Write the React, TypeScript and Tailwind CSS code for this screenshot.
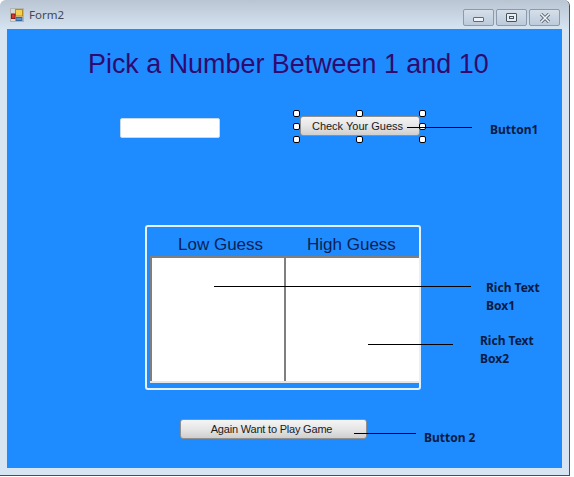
import React from 'react'

const Handle = ({ className }: { className: string }) => (
  <span className={`absolute w-[7px] h-[7px] bg-white border border-black rounded-[2px] ${className}`} />
)

const Leader = ({ className }: { className: string }) => (
  <div className={`absolute h-px bg-black ${className}`} />
)

const Note = ({ className, children }: { className: string; children: React.ReactNode }) => (
  <div className={`absolute font-['Noto_Sans',sans-serif] font-bold text-[12px] leading-[18px] text-[#0a1a40] ${className}`}>
    {children}
  </div>
)

const WinButton = ({ children }: { children: React.ReactNode }) => (
  <div className="w-[31px] h-[17px] flex items-center justify-center rounded-[2px] border border-[#8c9aac] bg-gradient-to-b from-[#d5dfea] to-[#bccada]">
    {children}
  </div>
)

const FormButton = ({ className, children }: { className: string; children?: React.ReactNode }) => (
  <div className={`relative shrink-0 flex items-center justify-center rounded-[3px] border border-[#8f8f8f] bg-gradient-to-b from-[#f4f4f4] via-[#e6e6e6] to-[#cfcfcf] text-[11px] text-[#1a1a1a] ${className}`}>
    {children}
  </div>
)

const App = () => {
  return (
    <div className="w-[574px] h-[477px] bg-white font-['Liberation_Sans',sans-serif] overflow-hidden">
      <div className="w-[570px] h-[476px] flex flex-col rounded-t-[6px] border-b border-r border-[#4a4f55] bg-[#d7e4f1]">
        {/* title bar */}
        <div className="h-[29px] shrink-0 flex items-center rounded-t-[6px] bg-gradient-to-b from-[#b9c5d3] to-[#d6e3f0] pl-[10px] pr-[9px]">
          <svg width="14" height="14" viewBox="0 0 14 14" className="shrink-0">
            <rect x="0.5" y="0.5" width="13" height="13" fill="#d8d8d4" stroke="#b4b4b0" />
            <rect x="5.5" y="1.5" width="7" height="6.5" fill="#f5cf4e" stroke="#b98a1c" />
            <rect x="1.5" y="6" width="3.5" height="4.5" fill="#d9362c" stroke="#8a1d18" />
            <rect x="6" y="9.5" width="6" height="3" fill="#5a8fd0" stroke="#3b649c" />
          </svg>
          <span className="ml-[5px] text-[11.5px] text-[#3f4854] font-['Noto_Sans',sans-serif]">Form2</span>
          <div className="ml-auto flex gap-[2px] mt-[6px]">
            <WinButton>
              <span className="block w-[11px] h-[5px] mt-[4px] rounded-[1px] bg-[#eef2f6] border border-[#5d6a7a]" />
            </WinButton>
            <WinButton>
              <span className="flex items-center justify-center w-[11px] h-[9px] rounded-[1px] border border-[#47525f] bg-[#e8edf3]">
                <span className="block w-[5px] h-[3px] border border-[#47525f]" />
              </span>
            </WinButton>
            <WinButton>
              <svg width="12" height="10" viewBox="0 0 12 10">
                <path d="M2 1 L10 9 M10 1 L2 9" stroke="#5a6675" strokeWidth="3.2" />
                <path d="M2 1 L10 9 M10 1 L2 9" stroke="#f2f5f8" strokeWidth="1.5" />
              </svg>
            </WinButton>
          </div>
        </div>

        {/* client area */}
        <div className="mx-[7px] h-[439px] relative flex flex-col bg-[#1e8cff]">
          <h1 className="pt-[18px] pl-[81px] text-[26.9px] leading-[34px] whitespace-nowrap font-normal text-[#300a6e]">
            Pick a Number Between 1 and 10
          </h1>

          <div className="mt-[35px] flex items-start">
            <input className="ml-[113px] mt-[2px] w-[100px] h-[20px] bg-white rounded-[2px] border border-[#c5d9ee]" />
            {/* selected button */}
            <FormButton className="ml-[80px] w-[120px] h-[20px] pr-[5px]">
              Check Your Guess
              <Handle className="left-[-8px] top-[-7px]" />
              <Handle className="left-[55px] top-[-7px]" />
              <Handle className="left-[118px] top-[-7px]" />
              <Handle className="left-[-8px] top-[6px]" />
              <Handle className="left-[118px] top-[6px]" />
              <Handle className="left-[-8px] top-[19px]" />
              <Handle className="left-[55px] top-[19px]" />
              <Handle className="left-[118px] top-[19px]" />
            </FormButton>
          </div>

          {/* guess panel */}
          <div className="ml-[138px] mt-[87px] w-[276px] h-[165px] shrink-0 rounded-[3px] border-2 border-[#e4f1fd] flex flex-col">
            <div className="h-[29px] shrink-0 flex gap-[44px] pl-[31px] pt-[8px] text-[17px] leading-[20px] text-[#0b1f55]">
              <span>Low Guess</span>
              <span>High Guess</span>
            </div>
            <div className="ml-[3px] h-[127px] flex border-t-2 border-b-2 border-t-[#7f7f7f] border-b-[#e6e6e6] bg-white">
              <div className="w-[136px] border-l-2 border-r-2 border-[#7f7f7f]" />
            </div>
          </div>

          <FormButton className="ml-[173px] mt-[29px] w-[187px] h-[20px] pr-[4px] tracking-[-0.2px]">
            Again Want to Play Game
          </FormButton>

          {/* annotations */}
          <Leader className="left-[400px] top-[98px] w-[65px]" />
          <Leader className="left-[207px] top-[257px] w-[257px]" />
          <Leader className="left-[361px] top-[315px] w-[85px]" />
          <Leader className="left-[347px] top-[404px] w-[62px]" />
          <Note className="left-[483px] top-[92px]">Button1</Note>
          <Note className="left-[479px] top-[250px]">Rich Text<br />Box1</Note>
          <Note className="left-[473px] top-[303px]">Rich Text<br />Box2</Note>
          <Note className="left-[417px] top-[400px]">Button 2</Note>
        </div>
      </div>
    </div>
  )
}

export default App
